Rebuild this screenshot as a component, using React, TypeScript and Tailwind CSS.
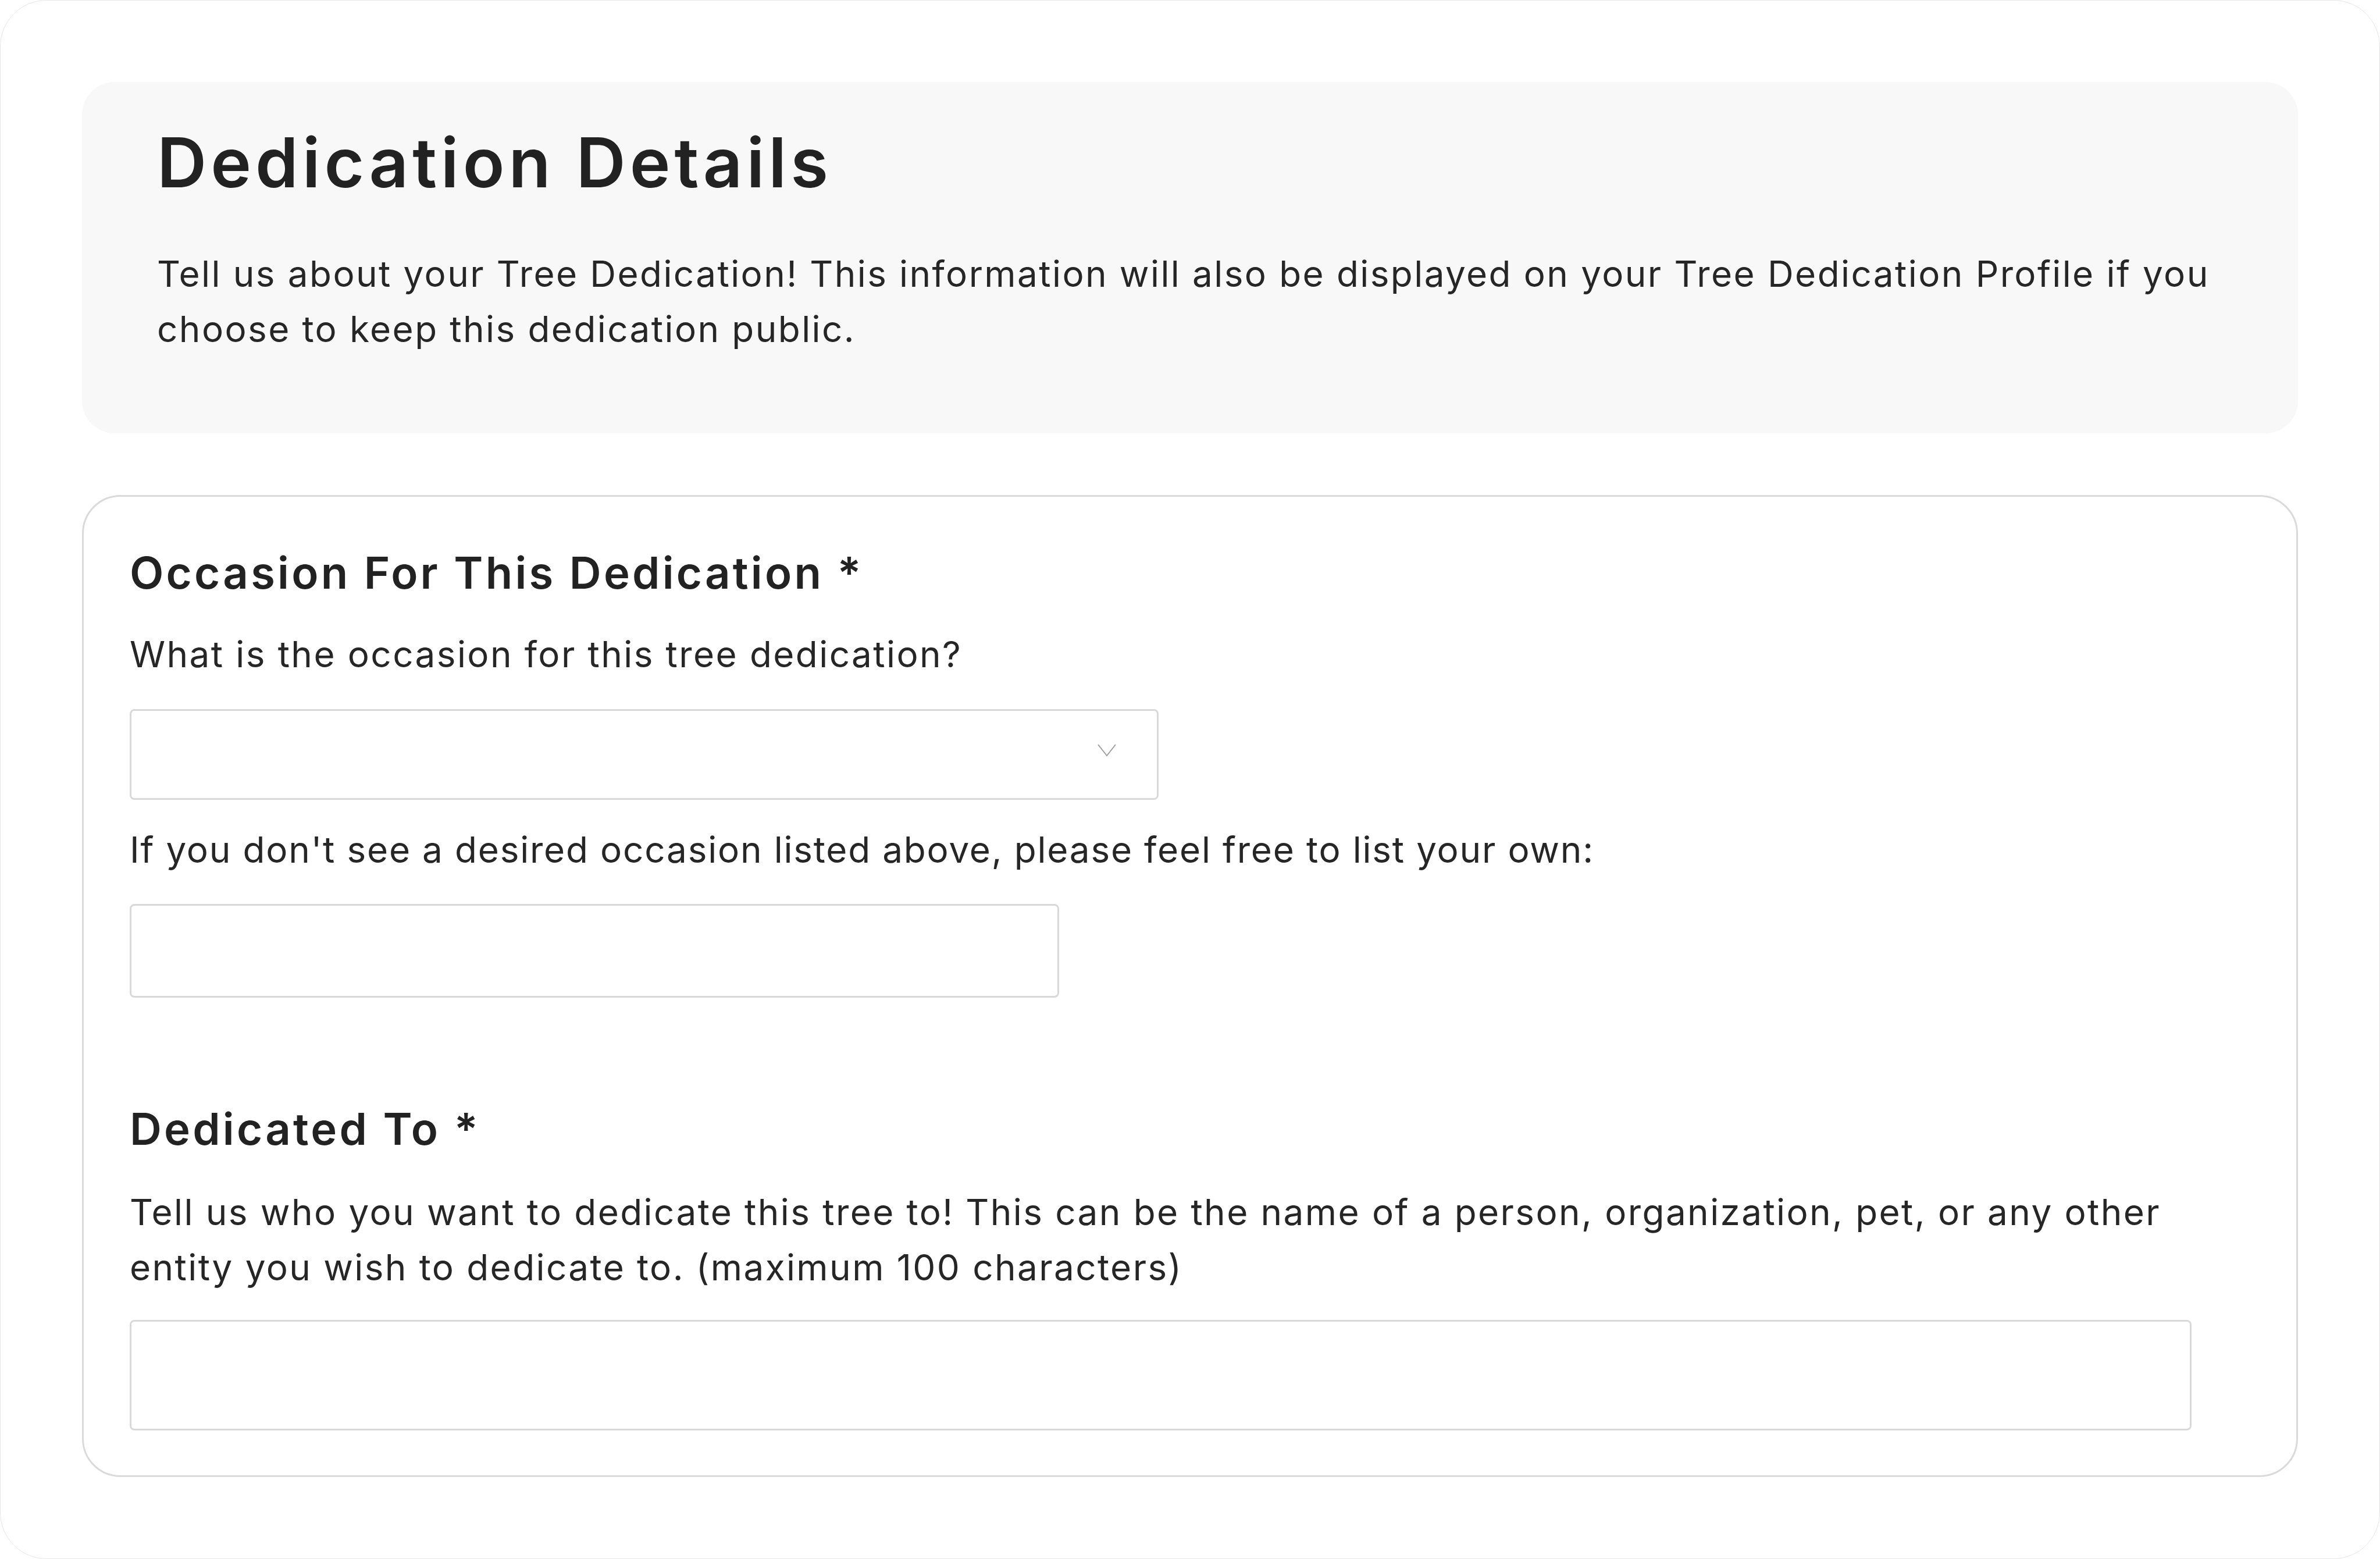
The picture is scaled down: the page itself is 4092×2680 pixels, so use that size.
const body = 'text-[62px] leading-[95px] tracking-[2.4px] text-[#262626]';
const sectionTitle = 'text-[76px] leading-[96px] font-semibold tracking-[4.2px] text-[#222222]';

function FieldBox({ className = '', children }: { className?: string; children?: React.ReactNode }) {
    return (
        <div className={`border-[3px] border-[#d9d9d9] rounded-[8px] bg-white ${className}`}>
            {children}
        </div>
    );
}

export default function App() {
    return (
        <div
            className="w-[4092px] h-[2680px] bg-white border border-[#e6e6e6] rounded-[80px] pt-[140px] px-[140px]"
            style={{ fontFamily: 'Inter, "Open Sans", sans-serif' }}
        >
            {/* intro panel */}
            <section className="bg-[#f8f8f8] rounded-[56px] pl-[129px] pr-[100px] pt-[68px] pb-[132px]">
                <h1 className="text-[118px] leading-[140px] font-semibold tracking-[7px] text-[#222222]">
                    Dedication Details
                </h1>
                <p className={`${body} mt-[74px]`}>
                    Tell us about your Tree Dedication! This information will also be displayed on your Tree
                    Dedication Profile if you choose to keep this dedication public.
                </p>
            </section>

            {/* form card */}
            <section className="mt-[106px] border-[3px] border-[#dadada] rounded-[66px] pl-[79px] pr-[80px] pt-[82px] pb-[77px]">
                <h2 className={sectionTitle}>Occasion For This Dedication *</h2>
                <p className={`${body} mt-[45px]`}>What is the occasion for this tree dedication?</p>
                <FieldBox className="mt-[47px] w-[1769px] h-[156px] flex items-center justify-end pr-[70px]">
                    <svg width="32" height="22" viewBox="0 0 32 22" className="-mt-[14px]">
                        <polyline points="1,1 16,20 31,1" fill="none" stroke="#9e9e9e" strokeWidth="2" />
                    </svg>
                </FieldBox>
                <p className="text-[62px] leading-[95px] tracking-[1.8px] text-[#262626] mt-[38px]">
                    If you don't see a desired occasion listed above, please feel free to list your own:
                </p>
                <FieldBox className="mt-[46px] w-[1598px] h-[161px]" />

                <h2 className={`${sectionTitle} mt-[177px]`}>Dedicated To *</h2>
                <p className={`${body} mt-[48px]`}>
                    Tell us who you want to dedicate this tree to! This can be the name of a person, organization,
                    pet, or any other entity you wish to dedicate to. (maximum 100 characters)
                </p>
                <FieldBox className="mt-[43px] w-[3545px] h-[190px]" />
            </section>
        </div>
    );
}
